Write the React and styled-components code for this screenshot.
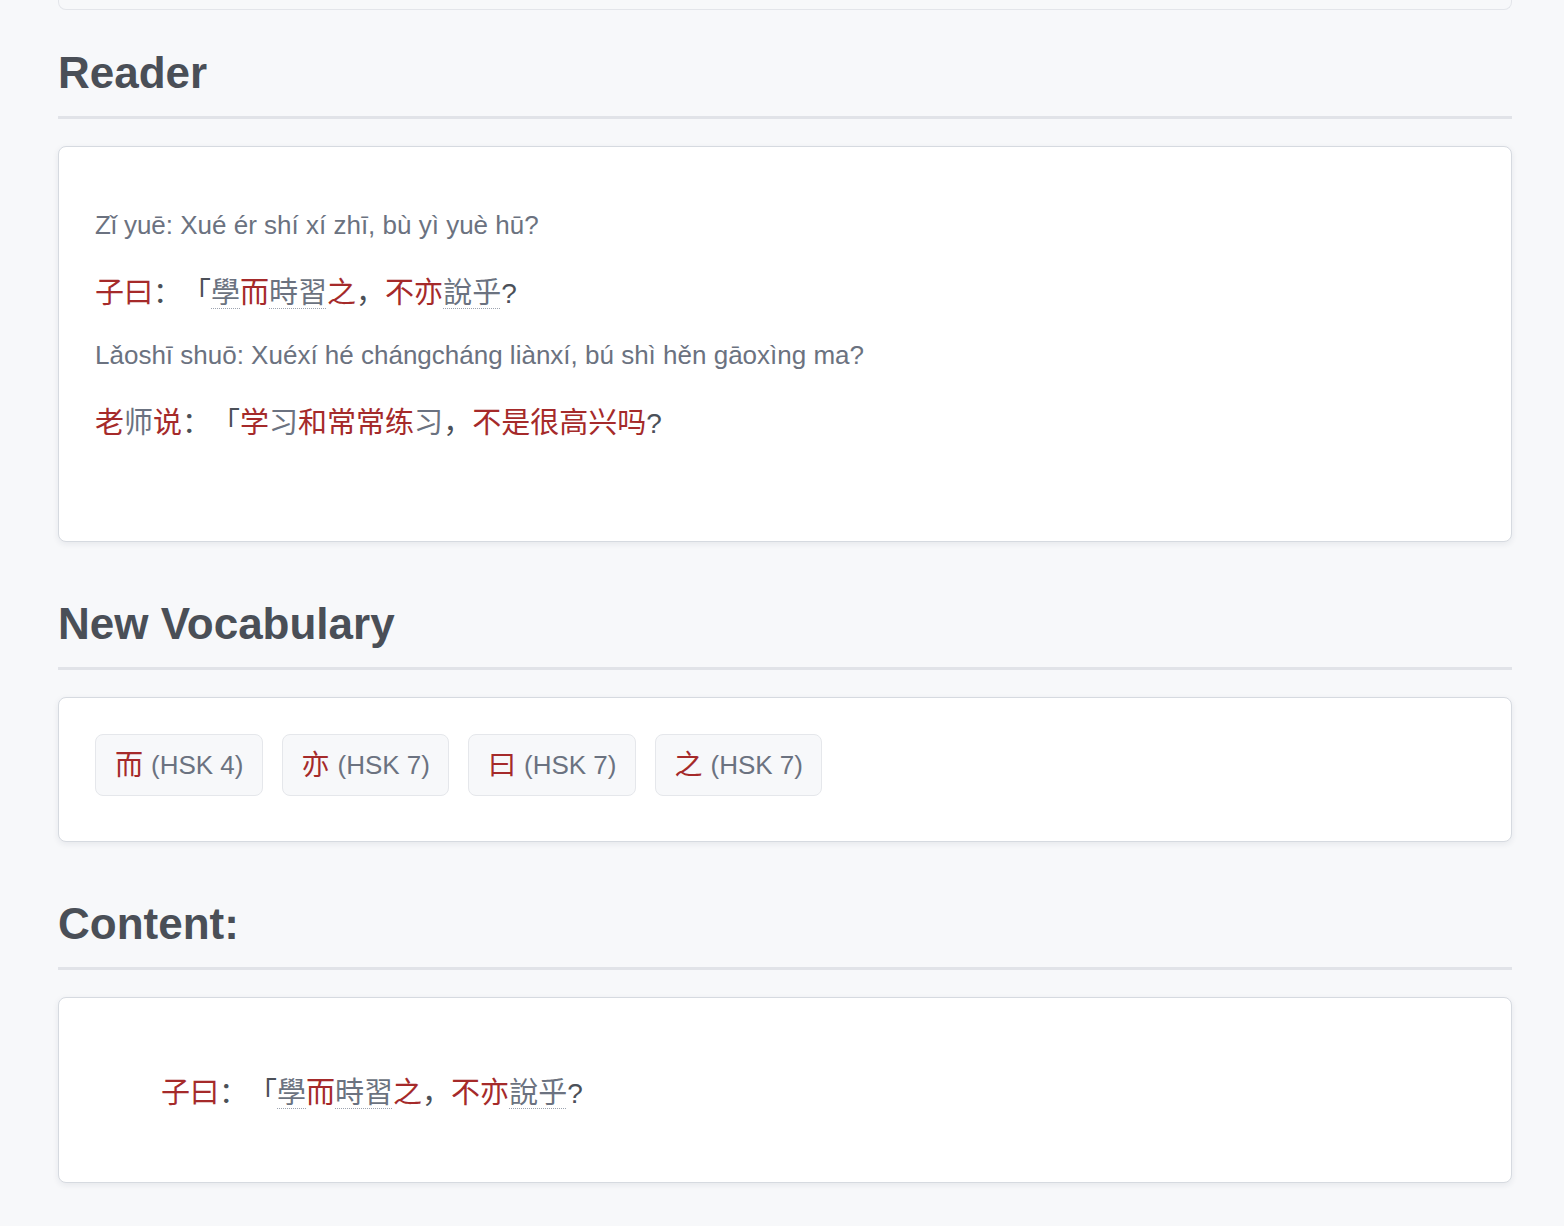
import React from "react";
import styled, { createGlobalStyle } from "styled-components";

const GlobalStyle = createGlobalStyle`
  html, body {
    margin: 0;
    padding: 0;
    background: #f7f8fa;
  }
  body {
    font-family: "Liberation Sans", Arial, "Noto Sans CJK SC", sans-serif;
    color: #4b5058;
  }
`;

const line1 = [
  ["子曰", "known"],
  ["：「", "punct"],
  ["學", "word"],
  ["而", "known"],
  ["時習", "word"],
  ["之", "known"],
  ["，", "punct"],
  ["不亦", "known"],
  ["說乎", "word"],
  ["?", "latin"],
];

const reader = [
  {
    pinyin: "Zǐ yuē: Xué ér shí xí zhī, bù yì yuè hū?",
    parts: line1,
  },
  {
    pinyin: "Lǎoshī shuō: Xuéxí hé chángcháng liànxí, bú shì hěn gāoxìng ma?",
    parts: [
      ["老", "known"],
      ["师", "plain"],
      ["说", "known"],
      ["：「", "punct"],
      ["学", "known"],
      ["习", "plain"],
      ["和常常练", "known"],
      ["习", "plain"],
      ["，", "punct"],
      ["不是很高兴吗", "known"],
      ["?", "latin"],
    ],
  },
];

const vocab = [
  { hanzi: "而", level: 4 },
  { hanzi: "亦", level: 7 },
  { hanzi: "曰", level: 7 },
  { hanzi: "之", level: 7 },
];

export default function App() {
  return (
    <>
      <GlobalStyle />
      <Page>
        <TopStub />

        <SectionTitle>Reader</SectionTitle>
        <Card>
          <ReaderBody>
            {reader.map((line, i) => (
              <React.Fragment key={i}>
                <Pinyin>{line.pinyin}</Pinyin>
                <HanziLine>
                  {line.parts.map(([txt, kind], j) => (
                    <Token key={j} $kind={kind}>
                      {txt}
                    </Token>
                  ))}
                </HanziLine>
              </React.Fragment>
            ))}
          </ReaderBody>
        </Card>

        <SectionTitle>New Vocabulary</SectionTitle>
        <Card>
          <ChipRow>
            {vocab.map((v) => (
              <Chip key={v.hanzi}>
                <ChipHanzi>{v.hanzi}</ChipHanzi>
                <ChipLevel>(HSK {v.level})</ChipLevel>
              </Chip>
            ))}
          </ChipRow>
        </Card>

        <SectionTitle>Content:</SectionTitle>
        <Card>
          <ContentBody>
            <HanziLine>
              {line1.map(([txt, kind], j) => (
                <Token key={j} $kind={kind}>
                  {txt}
                </Token>
              ))}
            </HanziLine>
          </ContentBody>
        </Card>
      </Page>
    </>
  );
}

const Page = styled.div`
  display: flex;
  flex-direction: column;
  width: 1454px;
  margin-left: 58px;
  padding-bottom: 40px;
`;

const TopStub = styled.div`
  height: 9px;
  border: 1px solid #e3e5ea;
  border-top: none;
  border-radius: 0 0 8px 8px;
`;

const SectionTitle = styled.h2`
  margin: 38px 0 0;
  padding-bottom: 19px;
  font-size: 44px;
  line-height: 49px;
  font-weight: 700;
  color: #4a4f57;
  border-bottom: 3px solid #e1e3e8;
`;

const Card = styled.div`
  margin: 27px 0 19px;
  background: #fff;
  border: 1px solid #d6dae0;
  border-radius: 8px;
  box-shadow: 0 2px 6px rgba(30, 40, 60, 0.08);
`;

const ReaderBody = styled.div`
  display: flex;
  flex-direction: column;
  gap: 25px;
  padding: 58px 36px 101px;
`;

const Pinyin = styled.div`
  height: 40px;
  font-size: 26px;
  line-height: 40px;
  color: #6b7280;
`;

const HanziLine = styled.div`
  height: 40px;
  font-family: "Noto Sans CJK SC", sans-serif;
  font-size: 29px;
  line-height: 40px;
  white-space: nowrap;
  text-spacing-trim: space-all;
`;

const kindColor = {
  known: "#a52a2a",
  punct: "#4b5058",
  latin: "#4b5058",
  word: "#6b7280",
  plain: "#6b7280",
};

const Token = styled.span`
  color: ${(p) => kindColor[p.$kind]};
  ${(p) =>
    p.$kind === "word" &&
    `text-decoration: underline dotted #9ca3af;
     text-decoration-thickness: 1px;
     text-underline-offset: 5px;`}
  ${(p) =>
    p.$kind === "latin" &&
    `font-family: "Liberation Sans", Arial, sans-serif; font-size: 28px; line-height: 1;`}
`;

const ChipRow = styled.div`
  display: flex;
  gap: 19px;
  padding: 36px 36px 45px;
`;

const Chip = styled.div`
  display: inline-flex;
  align-items: center;
  gap: 8px;
  height: 62px;
  box-sizing: border-box;
  padding: 0 18px 0 19px;
  background: #f7f8fa;
  border: 1px solid #e5e7eb;
  border-radius: 8px;
`;

const ChipHanzi = styled.span`
  display: block;
  font-family: "Noto Sans CJK SC", sans-serif;
  font-size: 28px;
  line-height: 1;
  margin-top: -4px;
  color: #a52a2a;
`;

const ChipLevel = styled.span`
  font-size: 26px;
  line-height: 1;
  color: #6b7280;
`;

const ContentBody = styled.div`
  padding: 72px 36px 72px 102px;
`;
